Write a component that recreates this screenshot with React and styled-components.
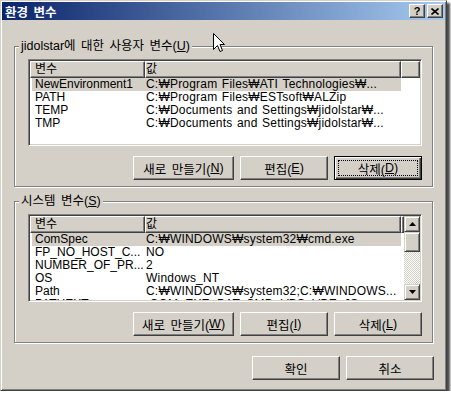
import styled, { createGlobalStyle } from "styled-components";

const GlobalStyle = createGlobalStyle`
  html, body {
    margin: 0;
    padding: 0;
    background: #ffffff;
  }
  body {
    font-family: "Liberation Sans", "Noto Sans CJK KR", sans-serif;
    font-size: 12.5px;
    word-spacing: 1px;
    color: #000000;
  }
  * {
    box-sizing: border-box;
  }
`;

const userVars = [
  { name: "NewEnvironment1", value: "C:₩Program Files₩ATI Technologies₩...", selected: true },
  { name: "PATH", value: "C:₩Program Files₩ESTsoft₩ALZip" },
  { name: "TEMP", value: "C:₩Documents and Settings₩jidolstar₩..." },
  { name: "TMP", value: "C:₩Documents and Settings₩jidolstar₩..." },
];

const systemVars = [
  { name: "ComSpec", value: "C:₩WINDOWS₩system32₩cmd.exe", selected: true },
  { name: "FP_NO_HOST_C...", value: "NO" },
  { name: "NUMBER_OF_PR...", value: "2" },
  { name: "OS", value: "Windows_NT" },
  { name: "Path", value: "C:₩WINDOWS₩system32;C:₩WINDOWS..." },
  { name: "PATHEXT", value: ".COM;.EXE;.BAT;.CMD;.VBS;.VBE;.JS;..." },
];

function VarList({ rows, height, scroll }) {
  return (
    <ListBox $height={height}>
      <ListMain>
        <HeaderRow>
          <HeaderCell $width={115} $pad={4}>변수</HeaderCell>
          <HeaderCell $width={256} $pad={0}>값</HeaderCell>
          <HeaderCell />
        </HeaderRow>
        {rows.map((r) => (
          <Row key={r.name} $selected={r.selected}>
            <Cell $width={113} $pad={3}>{r.name}</Cell>
            <Cell $width={256} $pad={1} $spread>{r.value}</Cell>
          </Row>
        ))}
      </ListMain>
      {scroll && (
        <ScrollBar>
          <ScrollButton>
            <svg width="7" height="4" viewBox="0 0 7 4"><path d="M3.5 0L7 4H0z" fill="#000" /></svg>
          </ScrollButton>
          <Thumb />
          <Track />
          <ScrollButton>
            <svg width="7" height="4" viewBox="0 0 7 4"><path d="M0 0h7L3.5 4z" fill="#000" /></svg>
          </ScrollButton>
        </ScrollBar>
      )}
    </ListBox>
  );
}

export default function App() {
  return (
    <>
      <GlobalStyle />
      <Window>
        <TitleBar>
          <Title>환경 변수</Title>
          <CaptionButtons>
            <CaptionButton>?</CaptionButton>
            <CaptionButton>
              <svg width="8" height="7" viewBox="0 0 8 7">
                <path d="M0.5 0.5L7.5 6.5M7.5 0.5L0.5 6.5" stroke="#000" strokeWidth="1.6" />
              </svg>
            </CaptionButton>
          </CaptionButtons>
        </TitleBar>

        <Body>
          <Group>
            <Legend>jidolstar에 대한 사용자 변수(<u>U</u>)</Legend>
            <GroupBody>
              <VarList rows={userVars} height={87} />
              <ButtonRow>
                <Button $width={101}>새로 만들기(<u>N</u>)</Button>
                <Button>편집(<u>E</u>)</Button>
                <Button $default>삭제(<u>D</u>)</Button>
              </ButtonRow>
            </GroupBody>
          </Group>

          <Group $gap>
            <Legend>시스템 변수(<u>S</u>)</Legend>
            <GroupBody>
              <VarList rows={systemVars} height={88} scroll />
              <ButtonRow>
                <Button $width={101}>새로 만들기(<u>W</u>)</Button>
                <Button>편집(<u>I</u>)</Button>
                <Button>삭제(<u>L</u>)</Button>
              </ButtonRow>
            </GroupBody>
          </Group>

          <DialogButtons>
            <Button>확인</Button>
            <Button>취소</Button>
          </DialogButtons>
        </Body>

        <Cursor width="12" height="19" viewBox="0 0 12 19">
          <path d="M0.5 0.5V16.5L4.5 12.5L7 18.5L9.5 17.5L7 11.5H11.5Z" fill="#fff" stroke="#000" strokeWidth="1" />
        </Cursor>
      </Window>
    </>
  );
}

// STYLED COMPONENTS

const Window = styled.div`
  position: relative;
  width: 447px;
  height: 391px;
  padding: 1px;
  display: flex;
  flex-direction: column;
  background: #d4d0c8;
  border: 1px solid;
  border-color: #d4d0c8 #404040 #404040 #d4d0c8;
  box-shadow: inset 1px 1px #ffffff, inset -1px -1px #808080, 3px 3px 2px rgba(0, 0, 0, 0.7);
`;

const TitleBar = styled.div`
  height: 18px;
  display: flex;
  align-items: center;
  justify-content: space-between;
  padding: 0 2px 0 3px;
  background: linear-gradient(to right, #0a246a, #a6caf0);
`;

const Title = styled.span`
  color: #ffffff;
  font-weight: bold;
  font-size: 12.5px;
  word-spacing: 2px;
`;

const CaptionButtons = styled.div`
  display: flex;
  gap: 2px;
`;

const CaptionButton = styled.div`
  width: 16px;
  height: 14px;
  display: flex;
  align-items: center;
  justify-content: center;
  background: #d4d0c8;
  border: 1px solid;
  border-color: #ffffff #404040 #404040 #ffffff;
  box-shadow: inset -1px -1px #808080;
  font-weight: bold;
  font-size: 11px;
  line-height: 1;
`;

const Body = styled.div`
  flex: 1;
  display: flex;
  flex-direction: column;
  padding: 20px 12px 0 12px;
`;

const Group = styled.fieldset`
  margin: ${(p) => (p.$gap ? "8px" : "0")} 0 0 0;
  padding: 0;
  min-width: 0;
  border: 1px solid #808080;
  box-shadow: inset 1px 1px #ffffff, 1px 1px #ffffff;
`;

const Legend = styled.legend`
  margin-left: 4px;
  padding: 0 2px;
  line-height: 13px;
  background: #d4d0c8;
  white-space: nowrap;
  word-spacing: 2px;
`;

const GroupBody = styled.div`
  display: flex;
  flex-direction: column;
  padding: 6px 10px 6px 13px;
`;

const ListBox = styled.div`
  height: ${(p) => p.$height}px;
  display: flex;
  padding: 1px;
  overflow: hidden;
  background: #ffffff;
  border: 1px solid;
  border-color: #808080 #ffffff #ffffff #808080;
  box-shadow: inset 1px 1px #404040, inset -1px -1px #d4d0c8;
`;

const ListMain = styled.div`
  flex: 1;
  min-width: 0;
  overflow: hidden;
  font-size: 12px;
`;

const HeaderRow = styled.div`
  display: flex;
  height: 17px;
`;

const HeaderCell = styled.div`
  flex: ${(p) => (p.$width ? `0 0 ${p.$width}px` : "1")};
  padding-left: ${(p) => p.$pad || 0}px;
  line-height: 14px;
  white-space: nowrap;
  background: #d4d0c8;
  border: 1px solid;
  border-color: #ffffff #404040 #404040 #ffffff;
  box-shadow: inset -1px -1px #808080;
`;

const Row = styled.div`
  display: flex;
  width: fit-content;
  height: 13px;
  line-height: 13px;
  margin-left: 2px;
  background: ${(p) => (p.$selected ? "#d4d0c8" : "transparent")};
`;

const Cell = styled.div`
  flex: 0 0 ${(p) => p.$width}px;
  padding-left: ${(p) => p.$pad}px;
  overflow: hidden;
  white-space: nowrap;
  letter-spacing: ${(p) => (p.$spread ? "0.2px" : "0")};
`;

const ScrollBar = styled.div`
  flex: 0 0 16px;
  display: flex;
  flex-direction: column;
`;

const ScrollButton = styled.div`
  flex: 0 0 16px;
  display: flex;
  align-items: center;
  justify-content: center;
  background: #d4d0c8;
  border: 1px solid;
  border-color: #d4d0c8 #404040 #404040 #d4d0c8;
  box-shadow: inset 1px 1px #ffffff, inset -1px -1px #808080;
`;

const Thumb = styled(ScrollButton)`
  flex: 0 0 20px;
`;

const Track = styled.div`
  flex: 1;
  background: repeating-conic-gradient(#ffffff 0 25%, #d4d0c8 0 50%) 0 0 / 2px 2px;
`;

const ButtonRow = styled.div`
  display: flex;
  justify-content: flex-end;
  gap: 6px;
  margin-top: 10px;
`;

const Button = styled.div`
  position: relative;
  width: ${(p) => p.$width || 88}px;
  height: 24px;
  display: flex;
  align-items: center;
  justify-content: center;
  background: #d4d0c8;
  white-space: nowrap;
  word-spacing: 2px;
  border: 1px solid;
  border-color: ${(p) => (p.$default ? "#000000" : "#ffffff #404040 #404040 #ffffff")};
  box-shadow: ${(p) =>
    p.$default
      ? "inset 1px 1px #ffffff, inset -1px -1px #404040, inset -2px -2px #808080"
      : "inset -1px -1px #808080"};

  &::after {
    content: "";
    display: ${(p) => (p.$default ? "block" : "none")};
    position: absolute;
    inset: 3px;
    border: 1px dotted #000000;
  }
`;

const DialogButtons = styled.div`
  display: flex;
  justify-content: flex-end;
  gap: 6px;
  margin: 13px -1px 0 0;
`;

const Cursor = styled.svg`
  position: absolute;
  left: 212px;
  top: 32px;
`;
